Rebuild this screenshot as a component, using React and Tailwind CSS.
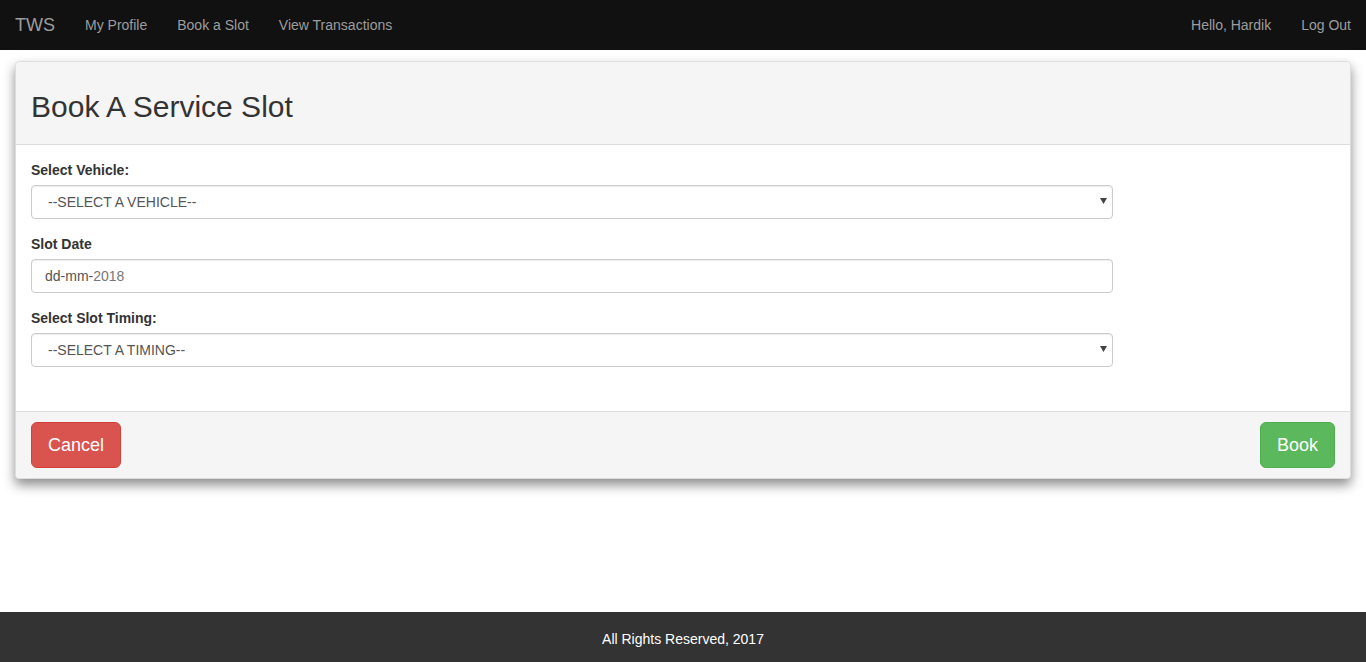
import React from "react";

const navLinks = ["My Profile", "Book a Slot", "View Transactions"];

function Caret() {
  return (
    <svg
      className="pointer-events-none absolute right-[6px] top-[13px] w-[7px] h-[6px]"
      viewBox="0 0 7 6"
      fill="#444"
    >
      <path d="M0 0h7L3.5 6z" />
    </svg>
  );
}

function Field({ label, children }) {
  return (
    <div className="mb-[15px]">
      <label className="block mb-[5px] text-[14px] leading-[20px] font-bold text-[#333]">
        {label}
      </label>
      {children}
    </div>
  );
}

function SelectBox({ text }) {
  return (
    <div className="relative w-[1082px]">
      <select className="block w-full h-[34px] appearance-none rounded-[4px] border border-[#ccc] bg-white pl-[16px] pr-[24px] text-[14px] text-[#555] shadow-[inset_0_1px_1px_rgba(0,0,0,0.075)] outline-none">
        <option>{text}</option>
      </select>
      <Caret />
    </div>
  );
}

export default function App() {
  return (
    <div className="min-h-screen flex flex-col bg-white font-['Liberation_Sans',Arial,sans-serif] text-[14px] text-[#333]">
      {/* navbar */}
      <nav className="h-[50px] bg-[#111] flex items-center justify-between">
        <div className="flex items-center">
          <a className="px-[15px] text-[18px] leading-[20px] text-[#9d9d9d]">TWS</a>
          {navLinks.map(l => (
            <a key={l} className="px-[15px] text-[14px] leading-[20px] text-[#9d9d9d]">
              {l}
            </a>
          ))}
        </div>
        <div className="flex items-center">
          <a className="px-[15px] text-[14px] leading-[20px] text-[#9d9d9d]">Hello, Hardik</a>
          <a className="px-[15px] text-[14px] leading-[20px] text-[#9d9d9d]">Log Out</a>
        </div>
      </nav>

      <main className="flex-1 px-[15px] pt-[11px]">
        <div className="rounded-[4px] border border-[#ddd] bg-white shadow-[0_6px_12px_rgba(0,0,0,0.45)]">
          <div className="bg-[#f5f5f5] border-b border-[#ddd] rounded-t-[4px] px-[15px] pt-[28px] pb-[21px]">
            <h2 className="text-[30px] leading-[33px] font-normal text-[#333]">Book A Service Slot</h2>
          </div>

          <div className="px-[15px] pt-[15px] pb-[29px]">
            <Field label="Select Vehicle:">
              <SelectBox text="--SELECT A VEHICLE--" />
            </Field>
            <Field label="Slot Date">
              <div className="w-[1082px] h-[34px] flex items-center rounded-[4px] border border-[#ccc] bg-white pl-[13px] text-[14px] shadow-[inset_0_1px_1px_rgba(0,0,0,0.075)]">
                <span className="text-[#555]">dd-mm-</span>
                <span className="text-[#777]">2018</span>
              </div>
            </Field>
            <Field label="Select Slot Timing:">
              <SelectBox text="--SELECT A TIMING--" />
            </Field>
          </div>

          <div className="bg-[#f5f5f5] border-t border-[#ddd] rounded-b-[4px] px-[15px] py-[10px] flex justify-between">
            <button className="h-[46px] px-[16px] rounded-[6px] border border-[#d43f3a] bg-[#d9534f] text-white text-[18px]">
              Cancel
            </button>
            <button className="h-[46px] px-[16px] rounded-[6px] border border-[#4cae4c] bg-[#5cb85c] text-white text-[18px]">
              Book
            </button>
          </div>
        </div>
      </main>

      <footer className="h-[50px] pt-[4px] bg-[#333] flex items-center justify-center text-white text-[14px]">
        All Rights Reserved, 2017
      </footer>
    </div>
  );
}
